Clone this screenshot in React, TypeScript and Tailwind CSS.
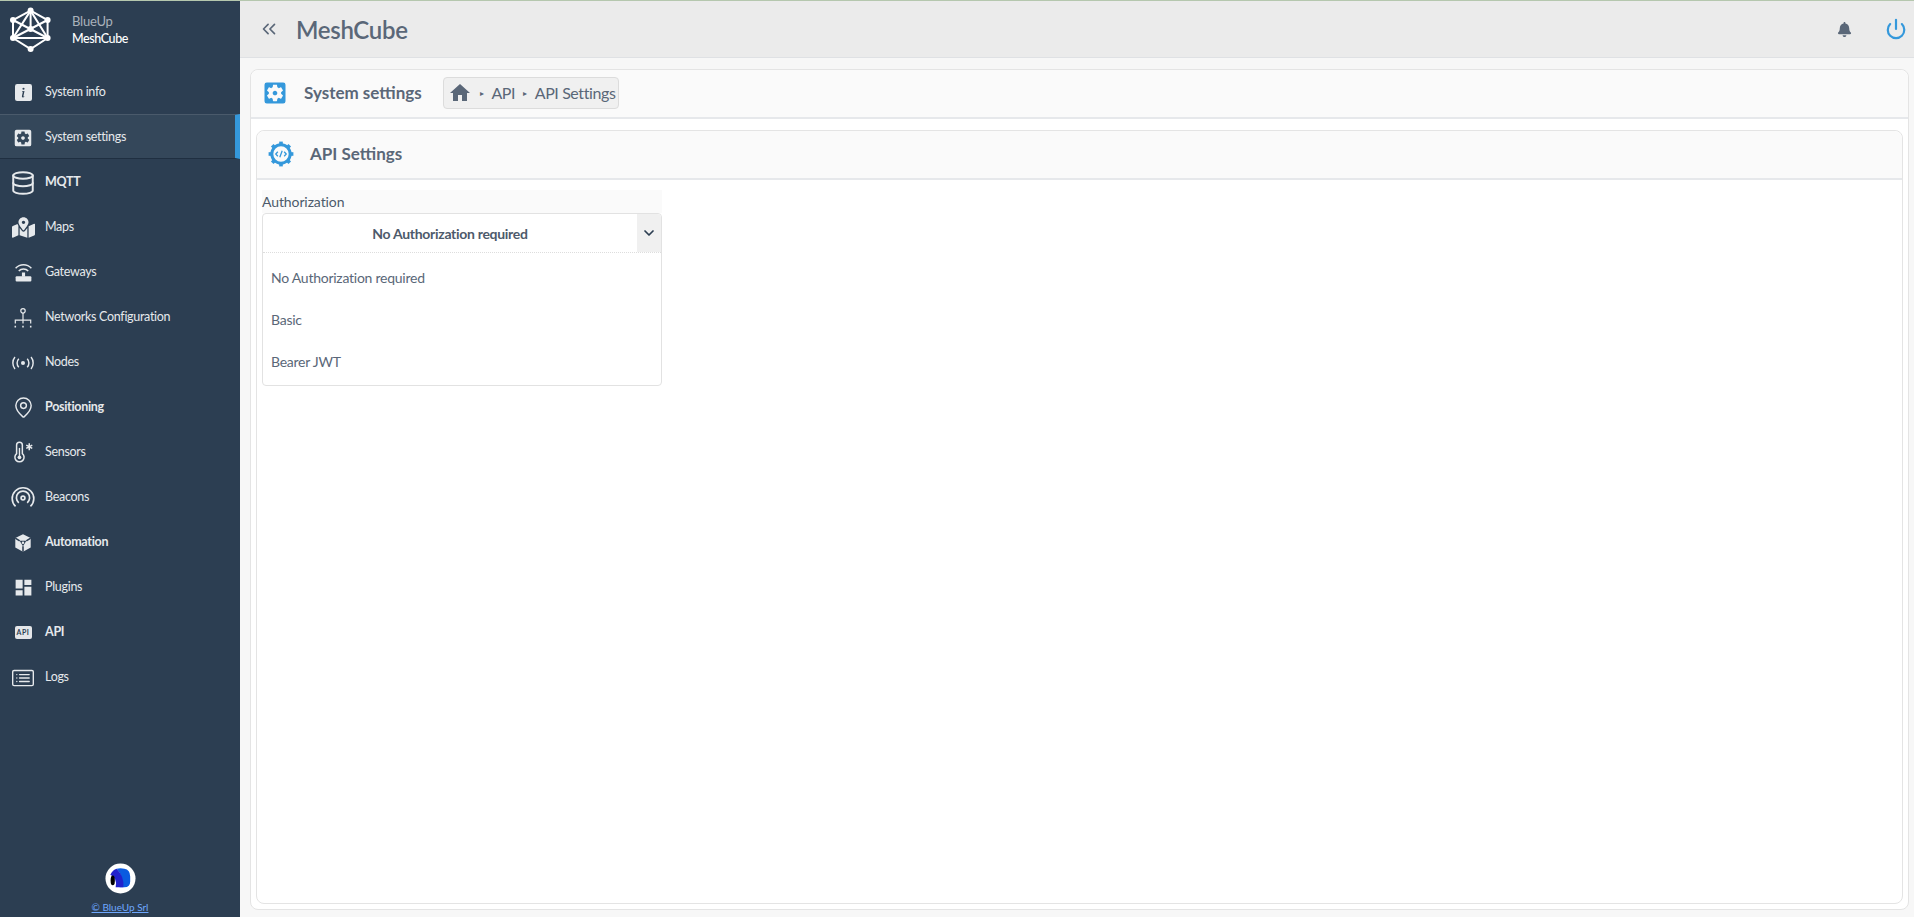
import React from 'react';
import { ChevronsLeft, Database, MapPin, Power, ChevronDown } from 'lucide-react';
import { BsInfoSquareFill, BsCardList } from 'react-icons/bs';
import { MdSettingsApplications, MdDashboard, MdHome } from 'react-icons/md';
import { FaMapMarkedAlt, FaBell } from 'react-icons/fa';

const font = "font-['Lato','Noto_Sans',sans-serif]";

const MeshLogo = () => (
  <svg viewBox="0 0 44 48" className="h-[48px] w-[44px] text-white" fill="none" stroke="currentColor" strokeWidth="2">
    <path d="M21.6 4.6 L38.6 14 L38.6 32 L21.6 43 L4 32 L4 14 Z" />
    <path d="M21.6 4.6 L4 32 L38.6 32 Z" />
    <path d="M4 14 L38.6 32 M38.6 14 L4 32" />
    <path d="M21.6 4.6 L21.6 23" />
    {[[21.6, 4.6], [38.6, 14], [38.6, 32], [21.6, 43], [4, 32], [4, 14], [21.6, 23]].map(([x, y]) => (
      <circle key={`${x}-${y}`} cx={x} cy={y} r="3" fill="currentColor" stroke="none" />
    ))}
  </svg>
);

const GatewayIcon = () => (
  <svg viewBox="0 0 20 20" className="h-[21px] w-[21px]" fill="none" stroke="currentColor" strokeWidth="1.4">
    <path d="M2.5 6 A10 10 0 0 1 17.5 6" />
    <path d="M5.5 8.6 A6 6 0 0 1 14.5 8.6" />
    <rect x="2.5" y="13.5" width="15" height="5" rx="1" fill="currentColor" stroke="none" />
    <rect x="8.5" y="10" width="3" height="4" fill="currentColor" stroke="none" />
  </svg>
);

const NetworkIcon = () => (
  <svg viewBox="0 0 20 20" className="h-[22px] w-[22px]" fill="none" stroke="currentColor" strokeWidth="1.1">
    <circle cx="10" cy="3.5" r="2" />
    <path d="M10 5.5 V12 M3 15 V12 H17 V15 M10 12 V15" />
    <path d="M2.3 17.8 h1.4 M9.3 17.8 h1.4 M16.3 17.8 h1.4" strokeWidth="1.6" />
  </svg>
);

const NodesIcon = () => (
  <svg viewBox="0 0 20 20" className="h-[24px] w-[24px]" fill="none" stroke="currentColor" strokeWidth="1.2">
    <circle cx="10" cy="10" r="1.7" fill="currentColor" stroke="none" />
    <path d="M6.5 6.5 A5 5 0 0 0 6.5 13.5 M13.5 6.5 A5 5 0 0 1 13.5 13.5" />
    <path d="M3.3 5 A8 8 0 0 0 3.3 15 M16.7 5 A8 8 0 0 1 16.7 15" />
  </svg>
);

const SensorIcon = () => (
  <svg viewBox="0 0 20 20" className="h-[23px] w-[23px]" fill="none" stroke="currentColor" strokeWidth="1.3">
    <path d="M4 3.5 a2.5 2.5 0 0 1 5 0 V11 a4 4 0 1 1 -5 0 Z" />
    <circle cx="6.5" cy="14.2" r="1.6" fill="currentColor" stroke="none" />
    <path d="M6.5 6 V13" strokeWidth="1.2" />
    <path d="M15 2 V8 M12.4 3.5 L17.6 6.5 M17.6 3.5 L12.4 6.5" />
  </svg>
);

const BeaconIcon = () => (
  <svg viewBox="0 0 20 20" className="h-[24px] w-[24px]" fill="none" stroke="currentColor" strokeWidth="1.4">
    <circle cx="10" cy="10" r="1.6" />
    <path d="M6.5 14 A5.5 5.5 0 1 1 13.5 14" />
    <path d="M3.8 17 A9 9 0 1 1 16.2 17" />
  </svg>
);

const AutomationIcon = () => (
  <svg viewBox="0 0 20 20" className="h-[22px] w-[22px]">
    <path d="M10 2 L17 5.5 V14 L10 18 L3 14 V5.5 Z" fill="currentColor" />
    <path d="M3 5.5 L7 8 M17 5.5 L13 8 M10 18 V13" fill="none" stroke="#2c3e52" strokeWidth="1.4" />
    <path d="M7 8 H13 L10 13 Z" fill="#2c3e52" />
    <circle cx="10" cy="9.8" r="1.1" fill="currentColor" />
  </svg>
);

const ApiIcon = () => (
  <div className="flex h-[13px] w-[17px] items-center justify-center rounded-[2px] bg-[#e4e6e9]">
    <span className="text-[7px] font-bold leading-none tracking-[0.5px] text-[#2c3e52]">API</span>
  </div>
);

const ApiSettingsIcon = () => (
  <svg viewBox="0 0 26 26" className="h-[26px] w-[26px] text-[#3498db]" fill="none">
    <circle cx="13" cy="13" r="9.2" stroke="currentColor" strokeWidth="3" />
    {[0, 45, 90, 135, 180, 225, 270, 315].map((a) => (
      <rect key={a} x="11.2" y="0.6" width="3.6" height="3.4" fill="currentColor" transform={`rotate(${a} 13 13)`} />
    ))}
    <path d="M9.8 10.8 L7.8 13 L9.8 15.2 M16.2 10.8 L18.2 13 L16.2 15.2 M14.2 9.8 L11.8 16.2" stroke="currentColor" strokeWidth="1.3" />
  </svg>
);

const BlueUpMark = () => (
  <svg viewBox="0 0 32 32" className="h-[31px] w-[31px]">
    <circle cx="16" cy="16" r="15.5" fill="#fff" />
    <path d="M12 6 Q16 5 20 6 Q26 7 26 14 V19 Q26 25 20 25 H15 Q20 14 12 6 Z" fill="#0a5be0" />
    <path d="M5.5 12 Q8 7 12 6 Q20 14 19 25 H11 Q13 15 5.5 12 Z" fill="#2222cc" />
    <ellipse cx="8" cy="18" rx="2.2" ry="5" fill="#000" />
  </svg>
);

const navItems: { label: string; icon: React.ReactNode; bold?: boolean; active?: boolean }[] = [
  { label: 'System info', icon: <BsInfoSquareFill size={17} /> },
  { label: 'System settings', icon: <MdSettingsApplications size={22} />, active: true },
  { label: 'MQTT', icon: <Database size={26} strokeWidth={1.8} />, bold: true },
  { label: 'Maps', icon: <FaMapMarkedAlt size={23} /> },
  { label: 'Gateways', icon: <GatewayIcon /> },
  { label: 'Networks Configuration', icon: <NetworkIcon /> },
  { label: 'Nodes', icon: <NodesIcon /> },
  { label: 'Positioning', icon: <MapPin size={23} strokeWidth={1.5} />, bold: true },
  { label: 'Sensors', icon: <SensorIcon /> },
  { label: 'Beacons', icon: <BeaconIcon /> },
  { label: 'Automation', icon: <AutomationIcon />, bold: true },
  { label: 'Plugins', icon: <MdDashboard size={21} /> },
  { label: 'API', icon: <ApiIcon />, bold: true },
  { label: 'Logs', icon: <BsCardList size={22} /> },
];

function Sidebar() {
  return (
    <aside className="flex w-[240px] shrink-0 flex-col bg-[#2c3e52] text-[#e6e9ec]">
      <div className="flex h-[68px] shrink-0 items-center pb-[10px] pl-[9px]">
        <MeshLogo />
        <div className="ml-[19px] text-[13px] leading-[18px] tracking-[-0.2px]">
          <div className="text-[#aab2bb]">BlueUp</div>
          <div className="text-[12.5px] font-medium tracking-[-0.4px] text-white">MeshCube</div>
        </div>
      </div>
      <nav className="flex flex-col">
        {navItems.map((item) => (
          <div
            key={item.label}
            className={
              item.active
                ? 'flex h-[45px] items-center border-t border-b border-r-[5px] border-t-[#4a5a6b] border-b-[#1f2f41] border-r-[#3498db] bg-[#34475a] pt-[2px]'
                : 'flex h-[45px] items-center pt-[2px]'
            }
          >
            <span className="flex w-[45px] justify-center pl-[1px]">{item.icon}</span>
            <span className={item.bold ? 'text-[12.5px] font-bold tracking-[-0.3px]' : 'text-[12.5px] tracking-[-0.3px]'}>
              {item.label}
            </span>
          </div>
        ))}
      </nav>
      <div className="mt-auto flex flex-col items-center pb-[3px]">
        <BlueUpMark />
        <a className="mt-[6px] text-[10px] leading-[14px] text-[#6ea8ff] underline" href="#">
          © BlueUp Srl
        </a>
      </div>
    </aside>
  );
}

function Select() {
  return (
    <div className="w-[400px] text-[#5a6778]">
      <div className="flex h-[23px] items-end bg-[#fafafa] text-[14px] leading-[22px] tracking-[-0.1px] text-[#4d5a6b]">Authorization</div>
      <div className="rounded-[4px] border border-[#e2e2e2] bg-white">
        <div className="flex h-[39px] items-center border-b border-dotted border-[#dddddd]">
          <div className="flex-1 text-center text-[14px] font-bold tracking-[-0.3px] text-[#4d5a6b]">No Authorization required</div>
          <div className="flex h-full w-[24px] items-center justify-center rounded-tr-[4px] bg-[#f0f0f0] text-[#2c3e52]">
            <ChevronDown size={16} strokeWidth={2.6} />
          </div>
        </div>
        <ul className="flex flex-col pb-[3px] pt-[3px] text-[14px] tracking-[-0.25px]">
          <li className="flex h-[42px] items-center pl-[8px]">No Authorization required</li>
          <li className="flex h-[42px] items-center pl-[8px]">Basic</li>
          <li className="flex h-[42px] items-center pl-[8px]">Bearer JWT</li>
        </ul>
      </div>
    </div>
  );
}

export default function App() {
  return (
    <div className={`${font} h-[917px] w-full overflow-hidden border-t border-[#b5c7ae] bg-[#f7f7f7]`}>
      <div className="flex h-full">
        <Sidebar />
        <main className="flex min-w-0 flex-1 flex-col">
          <header className="flex h-[57px] shrink-0 items-center border-b border-[#dfe1e4] bg-[#ebebeb] pl-[18px] pr-[7px] text-[#5a6778]">
            <ChevronsLeft size={22} strokeWidth={1.8} />
            <h1 className="ml-[16px] pt-[2px] text-[24px] font-semibold tracking-[-0.3px]">MeshCube</h1>
            <FaBell size={15} className="ml-auto mr-[33px]" />
            <Power size={22} strokeWidth={2.4} className="text-[#3498db]" />
          </header>
          <section className="mb-[7px] ml-[10px] mr-[5px] mt-[11px] flex flex-1 flex-col rounded-[8px] border border-[#e4e4e4] bg-white">
            <div className="flex h-[49px] shrink-0 items-center rounded-t-[8px] border-b-2 border-[#e6e8eb] bg-[#fafafa] pb-[1px] pl-[10px] text-[#5a6778]">
              <MdSettingsApplications size={28} className="text-[#3498db]" />
              <h2 className="ml-[15px] text-[17px] font-bold">System settings</h2>
              <div className="ml-[21px] flex h-[32px] items-center rounded-[4px] border border-[#dcdcdc] bg-[#f0f0f0] pl-[4px] pr-[3px] text-[16px] tracking-[-0.4px]">
                <MdHome size={24} />
                <span className="mx-[8px] text-[8px]">▸</span>
                <span>API</span>
                <span className="mx-[8px] text-[8px]">▸</span>
                <span>API Settings</span>
              </div>
            </div>
            <div className="flex flex-1 flex-col pb-[5px] pl-[5px] pr-[5px] pt-[11px]">
              <div className="flex flex-1 flex-col rounded-[8px] border border-[#e4e4e4] bg-white">
                <div className="flex h-[49px] shrink-0 items-center rounded-t-[8px] border-b-2 border-[#e6e8eb] bg-[#fafafa] pb-[1px] pl-[11px] text-[#5a6778]">
                  <ApiSettingsIcon />
                  <h3 className="ml-[16px] text-[17px] font-bold">API Settings</h3>
                </div>
                <div className="pl-[5px] pt-[10px]">
                  <Select />
                </div>
              </div>
            </div>
          </section>
        </main>
      </div>
    </div>
  );
}
